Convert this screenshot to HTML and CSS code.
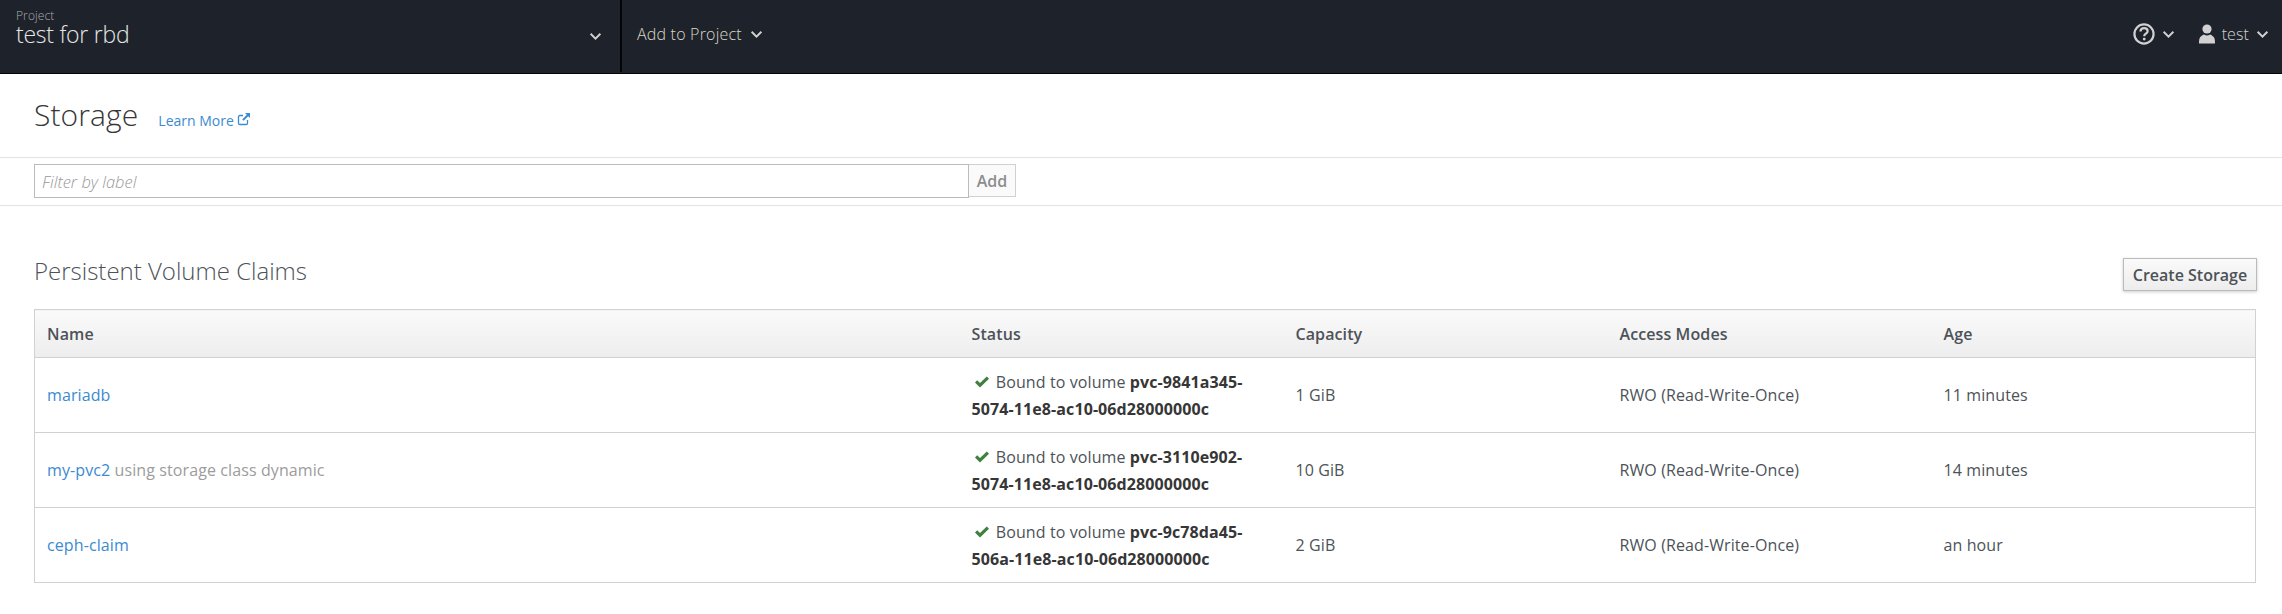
FILE: index.html
```html
<!DOCTYPE html>
<html>
<head>
    <title>Storage</title>
    <link rel="stylesheet" href="styles.css">
</head>
<body>
    <nav class="navbar">
        <div class="project-menu">
            <div class="project-name">
                <small>Project</small>
                <span>test for rbd</span>
            </div>
            <svg class="caret" viewBox="0 0 12 8"><path d="M1.500 1.500 6 6l4.500-4.500"/></svg>
        </div>
        <div class="add-menu">
            <span>Add to Project</span>
            <svg class="caret" viewBox="0 0 12 8"><path d="M1.500 1.500 6 6l4.500-4.500"/></svg>
        </div>
        <div class="nav-right">
            <div class="nav-item">
                <svg class="help-icon" viewBox="0 0 20 20">
                    <circle cx="10" cy="10" r="8.700"/>
                    <path d="M6.800 7.800c0-2 1.400-3.100 3.300-3.100s3.200 1.100 3.200 2.700c0 2.400-3.100 2.300-3.100 4.600"/>
                    <circle class="dot" cx="10.200" cy="14.600" r="1.300"/>
                </svg>
                <svg class="caret" viewBox="0 0 12 8"><path d="M1.500 1.500 6 6l4.500-4.500"/></svg>
            </div>
            <div class="nav-item user-item">
                <svg class="user-icon" viewBox="0 0 16 20">
                    <circle cx="8" cy="5" r="4.600"/>
                    <path d="M0 19.500c0-1 0-3.500.5-5C1.200 12.500 3.500 11 5 10.500c2 1.200 4 1.200 6 0 1.500.5 3.800 2 4.500 4 .5 1.500.5 4 .5 5z"/>
                </svg>
                <span>test</span>
                <svg class="caret" viewBox="0 0 12 8"><path d="M1.500 1.500 6 6l4.500-4.500"/></svg>
            </div>
        </div>
    </nav>

    <header class="page-head">
        <h1>Storage</h1>
        <a class="learn-more" href="#">Learn More
            <svg viewBox="0 0 14 14"><path d="M10.500 8v3.200a1.300 1.300 0 0 1-1.300 1.300H2.800a1.300 1.300 0 0 1-1.300-1.300V4.800a1.300 1.300 0 0 1 1.300-1.300H6"/><path class="arrow" d="M8 1h5v5l-1.800-1.800-4.600 4.600-1.400-1.400 4.600-4.600z"/></svg>
        </a>
    </header>

    <div class="filter-bar">
        <input class="filter-input" type="text" placeholder="Filter by label">
        <button class="add-btn">Add</button>
    </div>

    <main class="content">
        <div class="section-head">
            <h2>Persistent Volume Claims</h2>
            <button class="create-btn">Create Storage</button>
        </div>
        <table class="claims">
            <thead>
                <tr>
                    <th class="col-name">Name</th>
                    <th class="col-rest">Status</th>
                    <th class="col-rest">Capacity</th>
                    <th class="col-rest">Access Modes</th>
                    <th class="col-rest">Age</th>
                </tr>
            </thead>
            <tbody>
                <tr>
                    <td><a href="#">mariadb</a></td>
                    <td class="status">
                        <svg class="check" viewBox="0 0 16 12"><path d="M1 6.500 3.200 4.300 6 7 12.800.5 15 2.700 6 11.500z"/></svg>
                        Bound to volume <strong>pvc-9841a345-5074-11e8-ac10-06d28000000c</strong>
                    </td>
                    <td>1 GiB</td>
                    <td>RWO (Read-Write-Once)</td>
                    <td>11 minutes</td>
                </tr>
                <tr>
                    <td><a href="#">my-pvc2</a> <span class="muted">using storage class dynamic</span></td>
                    <td class="status">
                        <svg class="check" viewBox="0 0 16 12"><path d="M1 6.500 3.200 4.300 6 7 12.800.5 15 2.700 6 11.500z"/></svg>
                        Bound to volume <strong>pvc-3110e902-5074-11e8-ac10-06d28000000c</strong>
                    </td>
                    <td>10 GiB</td>
                    <td>RWO (Read-Write-Once)</td>
                    <td>14 minutes</td>
                </tr>
                <tr>
                    <td><a href="#">ceph-claim</a></td>
                    <td class="status">
                        <svg class="check" viewBox="0 0 16 12"><path d="M1 6.500 3.200 4.300 6 7 12.800.5 15 2.700 6 11.500z"/></svg>
                        Bound to volume <strong>pvc-9c78da45-506a-11e8-ac10-06d28000000c</strong>
                    </td>
                    <td>2 GiB</td>
                    <td>RWO (Read-Write-Once)</td>
                    <td>an hour</td>
                </tr>
            </tbody>
        </table>
    </main>
</body>
</html>
```

FILE: styles.css
```css
* {
    box-sizing: border-box;
}
body {
    margin: 0;
    background-color: #fff;
    color: #4d5258;
    font-family: "Open Sans", sans-serif;
    font-size: 16px;
    letter-spacing: .1px;
}
a {
    color: #3b8bd0;
    text-decoration: none;
}
.navbar {
    display: flex;
    height: 74px;
    background-color: #1e232b;
    border-bottom: 1px solid #050505;
    color: #d1d1d1;
}
.caret {
    width: 13px;
    height: 9px;
    fill: none;
    stroke: #d1d1d1;
    stroke-width: 1.800;
}
.project-menu {
    display: flex;
    align-items: center;
    justify-content: space-between;
    width: 622px;
    height: 72px;
    padding: 0 18px 0 16px;
    border-right: 2px solid #050505;
}
.project-name {
    display: flex;
    flex-direction: column;
    margin-top: -16px;
}
.project-name small {
    font-size: 12px;
    font-weight: 300;
    line-height: 12px;
    color: #a9abae;
}
.project-name span {
    font-size: 23px;
    font-weight: 300;
    line-height: 24px;
    letter-spacing: -.25px;
    color: #e6e6e6;
}
.add-menu {
    display: flex;
    align-items: center;
    gap: 8px;
    height: 68px;
    padding-left: 15px;
    font-size: 16px;
    font-weight: 300;
    letter-spacing: .2px;
    color: #dbd8c8;
}
.nav-right {
    display: flex;
    align-items: center;
    gap: 24px;
    height: 68px;
    margin-left: auto;
    padding-right: 13px;
}
.nav-item {
    display: flex;
    align-items: center;
    gap: 7px;
    font-size: 16px;
    font-weight: 300;
}
.help-icon {
    width: 22px;
    height: 22px;
    fill: none;
    stroke: #d1d1d1;
    stroke-width: 2;
}
.help-icon .dot {
    fill: #d1d1d1;
    stroke: none;
}
.user-icon {
    width: 16px;
    height: 20px;
    fill: #d1d1d1;
}
.page-head {
    display: flex;
    align-items: baseline;
    height: 84px;
    padding: 20px 34px 0;
    border-bottom: 1px solid #e3e3e3;
}
.page-head h1 {
    margin: 0 20px 0 0;
    font-size: 30px;
    font-weight: 300;
    line-height: 42px;
    color: #363636;
}
.learn-more {
    font-size: 14px;
    letter-spacing: 0;
}
.learn-more svg {
    width: 14px;
    height: 14px;
    fill: none;
    stroke: #3b8bd0;
    stroke-width: 1.300;
}
.learn-more .arrow {
    fill: #3b8bd0;
    stroke: none;
}
.filter-bar {
    display: flex;
    align-items: flex-start;
    height: 48px;
    padding: 6px 33px 0 34px;
    border-bottom: 1px solid #e3e3e3;
}
.filter-input {
    width: 935px;
    height: 34px;
    padding: 0 7px;
    border: 1px solid #bbb;
    font-family: "Open Sans", sans-serif;
    font-size: 16.500px;
}
.filter-input::placeholder {
    color: #999;
    font-style: italic;
    font-weight: 300;
}
.add-btn {
    width: 47px;
    height: 33px;
    border: 1px solid #d1d1d1;
    border-left: none;
    background-color: #fafafa;
    color: #8b8d8f;
    font-family: "Open Sans", sans-serif;
    font-size: 16px;
    font-weight: 600;
}
.content {
    padding: 0 25px 0 34px;
}
.section-head {
    display: flex;
    align-items: flex-start;
    justify-content: space-between;
    height: 103px;
    padding-top: 49px;
}
.section-head h2 {
    margin: 0;
    font-size: 24px;
    font-weight: 300;
    line-height: 32px;
    letter-spacing: 0;
    color: #4d5258;
}
.create-btn {
    width: 134px;
    height: 33px;
    margin-top: 3px;
    padding: 0;
    border: 1px solid #bbb;
    background: linear-gradient(#fafafa, #ededed);
    box-shadow: 0 1px 3px rgba(0, 0, 0, .2);
    color: #4d5258;
    font-family: "Open Sans", sans-serif;
    font-size: 16px;
    font-weight: 600;
}
.claims {
    width: 2222px;
    border-collapse: collapse;
    table-layout: fixed;
    border: 1px solid #d1d1d1;
}
.col-name {
    width: 925px;
}
.col-rest {
    width: 324px;
}
.claims th {
    height: 48px;
    padding: 0 12px;
    border-bottom: 1px solid #d1d1d1;
    background: linear-gradient(#fafafa, #ededed);
    color: #4d5258;
    font-weight: 600;
    text-align: left;
}
.claims td {
    height: 75px;
    padding: 8px 12px;
    border-bottom: 1px solid #d1d1d1;
    line-height: 27px;
}
.claims .status {
    padding: 9px 12px 7px;
}
.muted {
    color: #9c9c9c;
}
.claims strong {
    color: #363636;
    font-weight: 700;
}
.check {
    width: 16px;
    height: 12px;
    margin: 0 2px 0 2px;
    fill: #3f7f3f;
}
```
